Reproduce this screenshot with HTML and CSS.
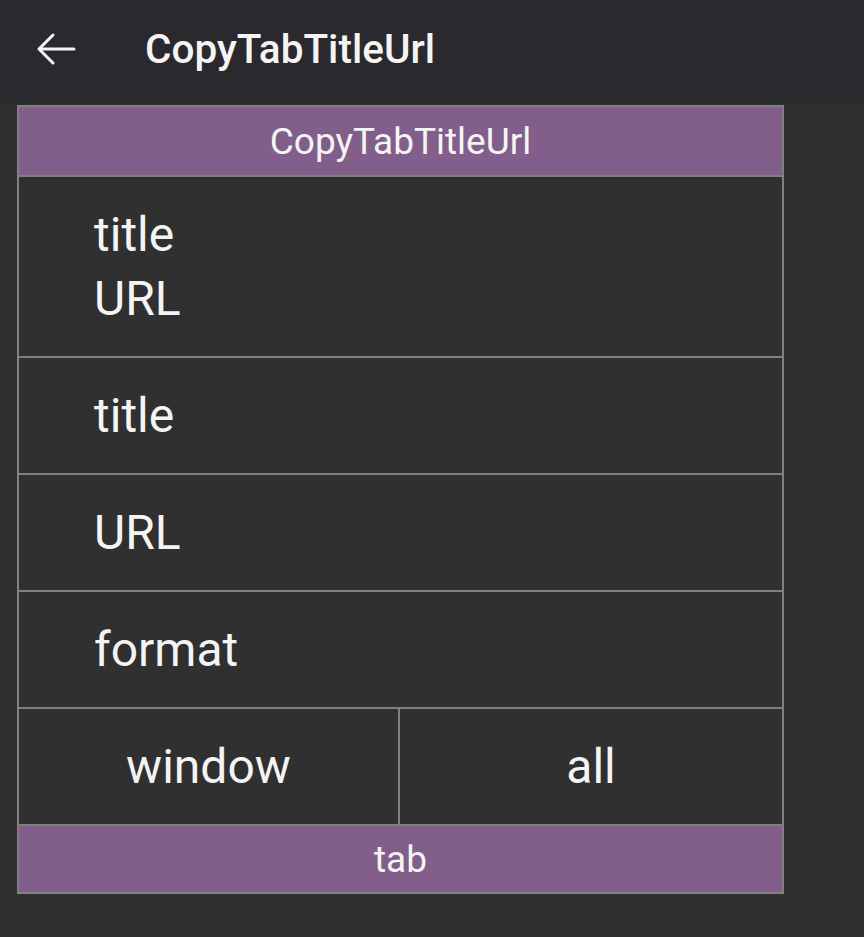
FILE: index.html
```html
<!DOCTYPE html>
<html>
<head>
<meta charset="utf-8">
<link rel="stylesheet" href="styles.css">
</head>
<body>
<header class="appbar">
  <span class="back">
    <svg width="40" height="34" viewBox="0 0 40 34">
      <path d="M3 17 H38 M17 3 L3 17 L17 31" fill="none" stroke="#f4f4f4" stroke-width="3" stroke-linecap="round" stroke-linejoin="round"/>
    </svg>
  </span>
  <h1 class="title">CopyTabTitleUrl</h1>
</header>
<main class="panel">
  <div class="band band-top">CopyTabTitleUrl</div>
  <div class="row">title<br>URL</div>
  <div class="row">title</div>
  <div class="row">URL</div>
  <div class="row">format</div>
  <div class="row split">
    <div class="cell">window</div>
    <div class="cell">all</div>
  </div>
  <div class="band band-bottom">tab</div>
</main>
</body>
</html>
```
FILE: styles.css
```css
html, body {
  margin: 0;
  padding: 0;
}
body {
  background: #303030;
  color: #f4f4f4;
  font-family: Roboto, "Noto Sans", sans-serif;
  width: 864px;
  height: 937px;
  overflow: hidden;
}
.appbar {
  height: 104px;
  background: #2a292e;
  display: flex;
  align-items: center;
}
.back {
  display: flex;
  margin-left: 36px;
  margin-top: -6px;
}
.title {
  margin: 0 0 0 69px;
  font-size: 40.5px;
  font-weight: 500;
  margin-top: -6px;
}
.panel {
  margin: 1px 0 0 17px;
  width: 763px;
  border: 2px solid #808080;
  display: flex;
  flex-direction: column;
}
.band {
  background: #825f8a;
  font-size: 37px;
  text-align: center;
  display: flex;
  align-items: center;
  justify-content: center;
}
.band-top {
  height: 68px;
  border-bottom: 2px solid #808080;
}
.band-bottom {
  height: 66px;
}
.row {
  font-size: 48px;
  line-height: 64px;
  padding: 26px 0 25px 75px;
  border-bottom: 2px solid #808080;
}
.row.split {
  display: grid;
  grid-template-columns: 379px 1fr;
  padding: 0;
}
.cell {
  text-align: center;
  padding: 26px 0 25px;
}
.cell + .cell {
  border-left: 2px solid #808080;
}
```
